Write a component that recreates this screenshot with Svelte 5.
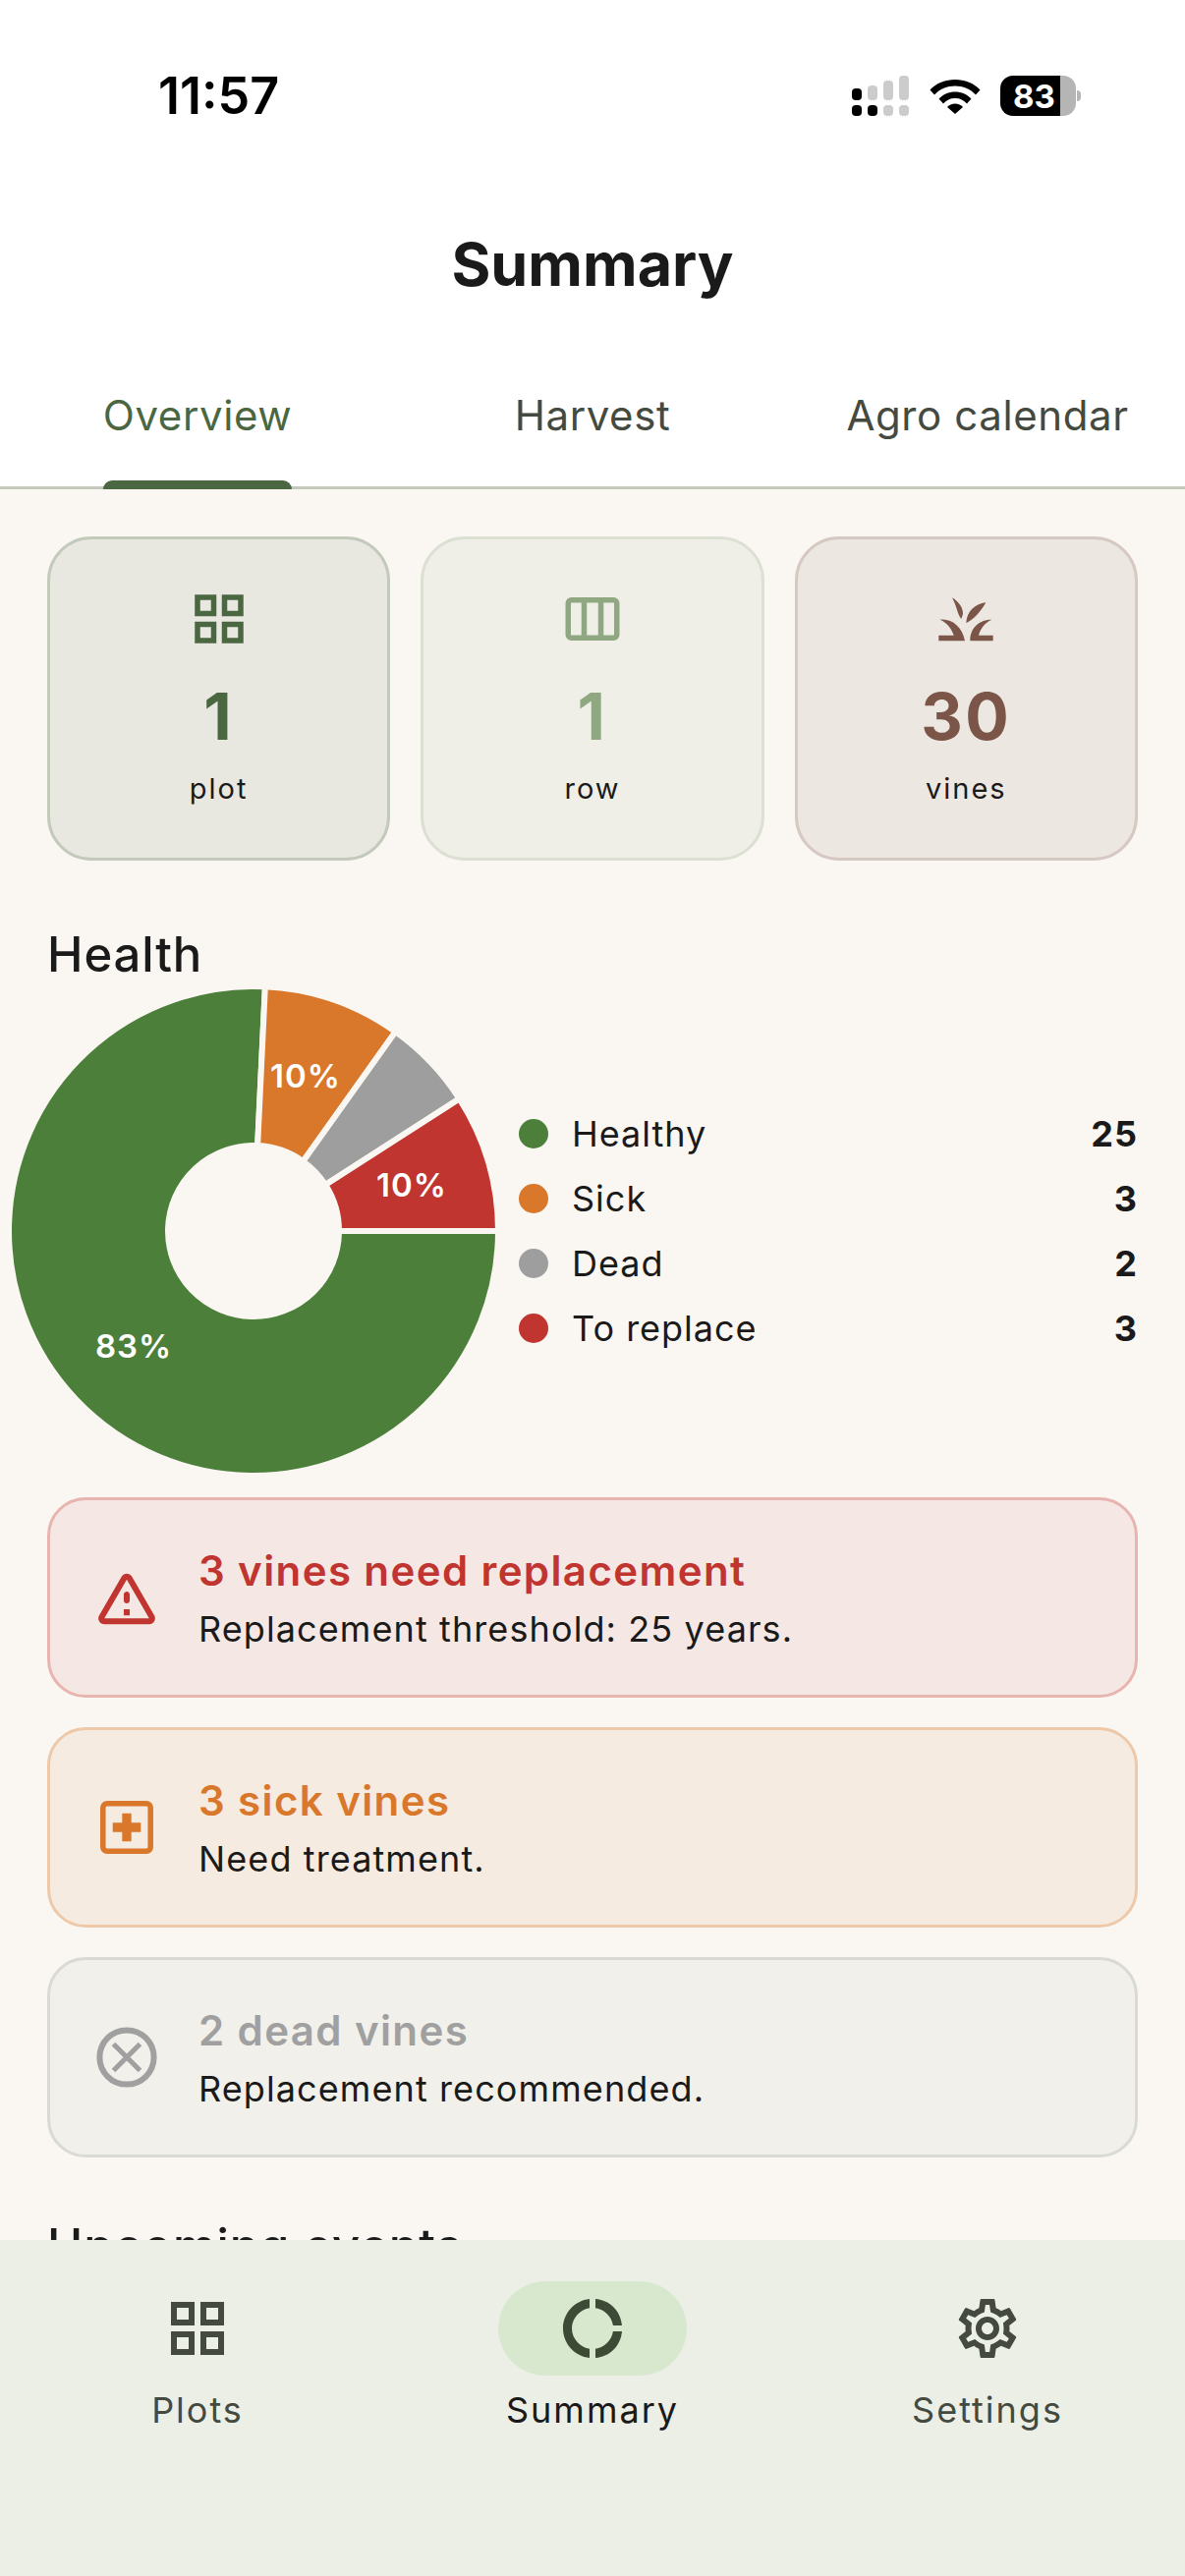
<script>
  const stats = [
    { value: 1, label: "plot", cls: "plot" },
    { value: 1, label: "row", cls: "row" },
    { value: 30, label: "vines", cls: "vine" },
  ];

  const legend = [
    { label: "Healthy", value: 25, color: "#4b7f3a" },
    { label: "Sick", value: 3, color: "#d9772b" },
    { label: "Dead", value: 2, color: "#9e9e9e" },
    { label: "To replace", value: 3, color: "#c0352f" },
  ];

  const total = legend.reduce((sum, l) => sum + l.value, 0);
  // the slice stroke eats 3px on each edge
  const R = 249;
  const r = 87;

  function point(radius, angle) {
    const a = (angle * Math.PI) / 180;
    return `${(radius * Math.cos(a)).toFixed(2)} ${(radius * Math.sin(a)).toFixed(2)}`;
  }

  // starts at 3 o'clock and goes clockwise
  let start = 0;
  const slices = legend.map((l) => {
    const sweep = (l.value / total) * 360;
    const end = start + sweep;
    const big = sweep > 180 ? 1 : 0;
    const d = `M${point(R, start)} A${R} ${R} 0 ${big} 1 ${point(R, end)} L${point(r, end)} A${r} ${r} 0 ${big} 0 ${point(r, start)} Z`;
    start = end;
    return { d, color: l.color };
  });

  const pieLabels = [
    { text: "83%", x: 136, y: 1371 },
    { text: "10%", x: 311, y: 1096 },
    { text: "10%", x: 419, y: 1207 },
  ];

  const tabs = ["Overview", "Harvest", "Agro calendar"];
</script>

<div class="screen">
  <div class="top">
    <div class="status">
      <span class="time">11:57</span>
      <div class="status-icons">
        <svg class="signal" width="59" height="41" viewBox="0 0 59 41">
          <rect x="0" y="13" width="10" height="12" rx="4" fill="#000" />
          <rect x="16" y="10" width="10" height="15" rx="4" fill="#ccc" />
          <rect x="32" y="5" width="10" height="20" rx="4" fill="#ccc" />
          <rect x="48" y="0" width="10" height="25" rx="4" fill="#ccc" />
          <rect x="0" y="30" width="10" height="11" rx="4" fill="#000" />
          <rect x="16" y="30" width="10" height="11" rx="4" fill="#000" />
          <rect x="32" y="30" width="10" height="11" rx="4" fill="#ccc" />
          <rect x="48" y="30" width="10" height="11" rx="4" fill="#ccc" />
        </svg>
        <svg class="wifi" width="52" height="37" viewBox="0 0 52 37">
          <path d="M0.5 12.5C7 5.5 16 2 26 2s19 3.5 25.500 10.500l-4.500 5C41.500 11.500 34 8.500 26 8.500S10.500 11.500 5 17.500z" fill="#000" />
          <path d="M9.500 21.500C14 17 19.500 14.500 26 14.500s12 2.500 16.500 7l-4.500 5C35 23 31 21 26 21s-9 2-12 5.500z" fill="#000" />
          <path d="M18 30c2-2 5-3.500 8-3.500s6 1.500 8 3.500l-8 7z" fill="#000" />
        </svg>
        <div class="battery">
          <div class="battery-body"><span>83</span></div>
          <div class="battery-nub"></div>
        </div>
      </div>
    </div>
    <h1>Summary</h1>
    <div class="tabs">
      {#each tabs as tab, i}
        <div class="tab" class:active={i === 0}><span>{tab}</span></div>
      {/each}
    </div>
  </div>

  <div class="content">
    <div class="stats">
      {#each stats as s}
        <div class="stat {s.cls}">
          {#if s.cls === "plot"}
            <svg width="66" height="66" viewBox="0 0 24 24" fill="currentColor"><path d="M3 3v8h8V3H3zm6 6H5V5h4v4zm-6 4v8h8v-8H3zm6 6H5v-4h4v4zm4-16v8h8V3h-8zm6 6h-4V5h4v4zm-6 4v8h8v-8h-8zm6 6h-4v-4h4v4z" /></svg>
          {:else if s.cls === "row"}
            <svg width="66" height="66" viewBox="0 0 24 24" fill="none" stroke="currentColor" stroke-width="2"><rect x="3" y="5" width="18" height="14" rx="1.200" /><path d="M8.900 5v14M15.100 5v14" /></svg>
          {:else}
            <svg width="66" height="66" viewBox="150 21 198 198" fill="currentColor">
              <path d="M166 170h46c-6-20-20-38-42-48 36-4 68 22 76 65h-80z" />
              <path d="M332 170h-44c5-20 18-38 40-48-36 0-66 22-66 65h70z" />
              <path d="M207 55c20 12 34 32 33 50l-5 15c-12-14-14-40-28-65z" />
              <path d="M310 70c-34 4-60 30-60 63 22-12 44-34 60-63z" />
            </svg>
          {/if}
          <div class="stat-value">{s.value}</div>
          <div class="stat-label">{s.label}</div>
        </div>
      {/each}
    </div>

    <h2>Health</h2>
    <div class="chart-row">
      <svg class="pie" width="492" height="492" viewBox="-246 -246 492 492">
        {#each slices as slice}
          <path d={slice.d} fill={slice.color} stroke="#faf7f2" stroke-width="6" />
        {/each}
        {#each pieLabels as l}
          <text x={l.x - 258} y={l.y - 1253 + 11} text-anchor="middle" class="pie-label">{l.text}</text>
        {/each}
      </svg>
      <div class="legend">
        {#each legend as l}
          <div class="legend-row">
            <span class="dot" style="background: {l.color}"></span>
            <span class="legend-label">{l.label}</span>
            <span class="legend-value">{l.value}</span>
          </div>
        {/each}
      </div>
    </div>

    <div class="alert danger">
      <svg class="alert-icon" viewBox="1.100 1.100 21.800 21.800" fill="currentColor"><path d="M12 5.990 19.530 19H4.470L12 5.990M2.740 18c-.77 1.330.19 3 1.730 3h15.060c1.540 0 2.500-1.670 1.730-3L13.730 4.990c-.77-1.330-2.690-1.330-3.460 0L2.740 18zM11 11v2c0 .55.45 1 1 1s1-.45 1-1v-2c0-.55-.45-1-1-1s-1 .45-1 1zm0 5h2v2h-2z" /></svg>
      <div>
        <div class="alert-title">3 vines need replacement</div>
        <div class="alert-text">Replacement threshold: 25 years.</div>
      </div>
    </div>
    <div class="alert warn">
      <svg class="alert-icon" viewBox="0 0 24 24" fill="none" stroke="currentColor" stroke-width="2"><rect x="3.200" y="3.200" width="17.600" height="17.600" rx="1.500" /><path d="M12 6.800v10.400M6.800 12h10.400" stroke-width="3.400" /></svg>
      <div>
        <div class="alert-title">3 sick vines</div>
        <div class="alert-text">Need treatment.</div>
      </div>
    </div>
    <div class="alert dead">
      <svg class="alert-icon" viewBox="1 1 22 22" fill="none" stroke="currentColor" stroke-width="2"><circle cx="12" cy="12" r="9.200" /><path d="M7.500 7.500l9 9M16.500 7.500l-9 9" stroke-width="1.700" /></svg>
      <div>
        <div class="alert-title">2 dead vines</div>
        <div class="alert-text">Replacement recommended.</div>
      </div>
    </div>

    <h2 class="upcoming">Upcoming events</h2>
  </div>

  <nav>
    <div class="nav-item">
      <div class="nav-icon">
        <svg width="72" height="72" viewBox="0 0 24 24" fill="currentColor"><path d="M3 3v8h8V3H3zm6 6H5V5h4v4zm-6 4v8h8v-8H3zm6 6H5v-4h4v4zm4-16v8h8V3h-8zm6 6h-4V5h4v4zm-6 4v8h8v-8h-8zm6 6h-4v-4h4v4z" /></svg>
      </div>
      <span>Plots</span>
    </div>
    <div class="nav-item current">
      <div class="nav-icon">
        <svg width="72" height="72" viewBox="0 0 24 24" fill="currentColor"><path d="M11 5.080V2c-5 .5-9 4.810-9 10s4 9.500 9 10v-3.080c-3-.48-6-3.190-6-6.920s3-6.440 6-6.920zM18.970 11H22c-.47-5-4-8.530-9-9v3.080C16 5.510 18.540 8 18.970 11zM13 18.920V22c5-.47 8.530-4 9-9h-3.030c-.43 3-2.970 5.490-5.970 5.920z" /></svg>
      </div>
      <span>Summary</span>
    </div>
    <div class="nav-item">
      <div class="nav-icon">
        <svg width="72" height="72" viewBox="0 0 24 24" fill="currentColor"><path d="M19.430 12.980c.04-.32.07-.64.07-.98 0-.34-.03-.66-.07-.98l2.110-1.650c.19-.15.24-.42.12-.64l-2-3.460c-.09-.16-.26-.25-.44-.25-.06 0-.12.01-.17.03l-2.490 1c-.52-.4-1.080-.73-1.690-.98l-.38-2.650C14.460 2.180 14.250 2 14 2h-4c-.25 0-.46.18-.49.42l-.38 2.650c-.61.25-1.170.59-1.690.98l-2.490-1c-.06-.02-.12-.03-.18-.03-.17 0-.34.09-.43.25l-2 3.460c-.13.22-.07.49.12.64l2.110 1.650c-.04.32-.07.65-.07.98 0 .33.03.66.07.98l-2.110 1.650c-.19.15-.24.42-.12.64l2 3.460c.09.16.26.25.44.25.06 0 .12-.01.17-.03l2.490-1c.52.4 1.080.73 1.690.98l.38 2.650c.03.24.24.42.49.42h4c.25 0 .46-.18.49-.42l.38-2.650c.61-.25 1.170-.59 1.690-.98l2.490 1c.06.02.12.03.18.03.17 0 .34-.09.43-.25l2-3.460c.12-.22.07-.49-.12-.64l-2.110-1.650zm-1.980-1.710c.04.31.05.52.05.73 0 .21-.02.43-.05.73l-.14 1.130.89.7 1.080.84-.7 1.210-1.270-.51-1.040-.42-.9.68c-.43.32-.84.56-1.250.73l-1.060.43-.16 1.130-.2 1.350h-1.400l-.19-1.350-.16-1.130-1.060-.43c-.43-.18-.83-.41-1.230-.71l-.91-.7-1.060.43-1.270.51-.7-1.210 1.080-.84.89-.7-.14-1.130c-.03-.31-.05-.54-.05-.74s.02-.43.05-.73l.14-1.130-.89-.7-1.080-.84.7-1.210 1.270.51 1.040.42.9-.68c.43-.32.84-.56 1.250-.73l1.060-.43.16-1.130.2-1.350h1.390l.19 1.350.16 1.130 1.060.43c.43.18.83.41 1.230.71l.91.7 1.060-.43 1.270-.51.7 1.210-1.070.85-.89.7.14 1.130zM12 8c-2.210 0-4 1.790-4 4s1.790 4 4 4 4-1.790 4-4-1.790-4-4-4zm0 6c-1.100 0-2-.9-2-2s.9-2 2-2 2 .9 2 2-.9 2-2 2z" /></svg>
      </div>
      <span>Settings</span>
    </div>
  </nav>
</div>

<style>
  :global(body) {
    margin: 0;
    background: #faf7f2;
  }

  .screen {
    width: 1206px;
    height: 2622px;
    display: flex;
    flex-direction: column;
    overflow: hidden;
    background: #faf7f2;
    color: #1a1a1a;
    font-family: Inter, "Liberation Sans", sans-serif;
  }

  .top {
    background: #fff;
    flex: none;
  }

  .status {
    height: 195px;
    display: flex;
    align-items: center;
    justify-content: space-between;
    padding: 0 106px 0 161px;
  }

  .time {
    font-size: 52px;
    font-weight: 600;
    color: #000;
  }

  .status-icons {
    display: flex;
    align-items: center;
    gap: 20px;
  }

  .battery {
    display: flex;
    align-items: center;
  }

  .battery-body {
    width: 77px;
    height: 41px;
    border-radius: 13px;
    background: linear-gradient(to right, #000 61px, #b5b5b5 61px);
    display: flex;
    align-items: center;
    padding-left: 13px;
    box-sizing: border-box;
  }

  .battery-body span {
    font-size: 33px;
    font-weight: 700;
    color: #fff;
  }

  .battery-nub {
    width: 4px;
    height: 11px;
    margin-left: 1px;
    border-radius: 0 4px 4px 0;
    background: #b5b5b5;
  }

  h1 {
    margin: 0;
    height: 149px;
    font-size: 61px;
    line-height: 149px;
    font-weight: 700;
    text-align: center;
  }

  .tabs {
    display: grid;
    grid-template-columns: repeat(3, 1fr);
    height: 151px;
    border-bottom: 3px solid #c4c8bc;
    box-sizing: content-box;
  }

  .tab {
    text-align: center;
    color: #444a40;
    font-size: 42px;
    line-height: 58px;
    padding-top: 50px;
    letter-spacing: 0.6px;
  }

  .tab span {
    position: relative;
    display: inline-block;
    height: 101px;
  }

  .tab.active {
    color: #4a6741;
  }

  .tab.active span::after {
    content: "";
    position: absolute;
    left: 0;
    right: 0;
    bottom: -3px;
    height: 9px;
    border-radius: 9px 9px 0 0;
    background: #4a6741;
  }

  .content {
    flex: 1;
    min-height: 0;
    overflow: hidden;
    padding: 48px 48px 0;
  }

  .stats {
    display: grid;
    grid-template-columns: repeat(3, 1fr);
    gap: 31px;
  }

  .stat {
    height: 330px;
    box-sizing: border-box;
    padding-top: 48px;
    border: 3px solid;
    border-radius: 45px;
    display: flex;
    flex-direction: column;
    align-items: center;
  }

  .stat-value {
    font-size: 66px;
    line-height: 80px;
    font-weight: 700;
    margin-top: 26px;
    letter-spacing: 2.500px;
  }

  .stat-label {
    font-size: 29px;
    line-height: 40px;
    margin-top: 14px;
    color: #1a1a1a;
    letter-spacing: 2px;
  }

  .plot {
    background: #e8e8e0;
    border-color: #c3cabb;
    color: #4a6741;
  }

  .row {
    background: #efefe7;
    border-color: #dce0d3;
    color: #8fa882;
  }

  .vine {
    background: #ece7e1;
    border-color: #d6c8c2;
    color: #7a5548;
  }

  h2 {
    margin: 67px 0 0;
    font-size: 49px;
    line-height: 58px;
    font-weight: 500;
    height: 64px;
    letter-spacing: 0.9px;
  }

  .chart-row {
    display: flex;
    align-items: center;
    gap: 24px;
    margin-left: -36px;
  }

  .pie {
    display: block;
    flex: none;
    overflow: visible;
  }

  .pie-label {
    fill: #fff;
    font-size: 33px;
    font-weight: 600;
    letter-spacing: 1px;
  }

  .legend {
    flex: 1;
  }

  .legend-row {
    height: 66px;
    display: flex;
    align-items: center;
    font-size: 36px;
    letter-spacing: 1px;
  }

  .dot {
    width: 30px;
    height: 30px;
    border-radius: 50%;
    margin-right: 24px;
  }

  .legend-label {
    flex: 1;
  }

  .legend-value {
    font-weight: 700;
  }

  .alert {
    height: 204px;
    box-sizing: border-box;
    margin-top: 30px;
    border: 3px solid;
    border-radius: 39px;
    padding-left: 45px;
    display: flex;
    align-items: center;
    gap: 40px;
  }

  .danger {
    margin-top: 25px;
    background: #f5e8e4;
    border-color: #e8b4b0;
  }

  .warn {
    background: #f6ebe1;
    border-color: #eec9a9;
  }

  .dead {
    background: #f2f0eb;
    border-color: #d9d9d5;
  }

  .alert-icon {
    width: 66px;
    height: 66px;
    flex: none;
  }

  .danger .alert-icon,
  .danger .alert-title {
    color: #c0352f;
  }

  .warn .alert-icon,
  .warn .alert-title {
    color: #d9772b;
  }

  .dead .alert-icon,
  .dead .alert-title {
    color: #a0a0a0;
  }

  .alert-title {
    font-size: 42px;
    line-height: 56px;
    font-weight: 600;
    letter-spacing: 1.400px;
  }

  .alert-text {
    font-size: 36px;
    line-height: 48px;
    margin-top: 7px;
    letter-spacing: 1.100px;
  }

  .upcoming {
    margin-top: 62px;
  }

  nav {
    flex: none;
    height: 342px;
    background: #ecefe6;
    display: grid;
    grid-template-columns: repeat(3, 1fr);
    color: #444a40;
  }

  .nav-item {
    display: flex;
    flex-direction: column;
    align-items: center;
    padding-top: 42px;
    font-size: 36px;
    line-height: 50px;
    letter-spacing: 2px;
  }

  .nav-icon {
    width: 192px;
    height: 96px;
    border-radius: 48px;
    display: flex;
    align-items: center;
    justify-content: center;
    margin-bottom: 10px;
  }

  .current {
    color: #1a1a1a;
  }

  .current .nav-icon {
    background: #d8e8cf;
    color: #3d4a36;
  }
</style>
